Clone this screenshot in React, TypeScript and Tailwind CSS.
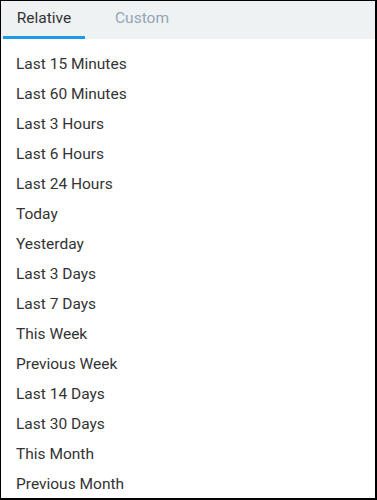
const ranges = [
  'Last 15 Minutes',
  'Last 60 Minutes',
  'Last 3 Hours',
  'Last 6 Hours',
  'Last 24 Hours',
  'Today',
  'Yesterday',
  'Last 3 Days',
  'Last 7 Days',
  'This Week',
  'Previous Week',
  'Last 14 Days',
  'Last 30 Days',
  'This Month',
  'Previous Month',
];

export default function App() {
  return (
    <div className="w-[377px] h-[500px] overflow-hidden border-t border-l border-r-2 border-b-2 border-black bg-white font-['Roboto',sans-serif]">
      <div className="flex h-[38px] bg-[#eef2f3] pl-[2px]">
        <button className="w-[82px] border-b-[3px] border-[#1e9be8] pt-[1px] text-[15.5px] text-[#333333]">
          Relative
        </button>
        <button className="w-[114px] border-b-[3px] border-transparent pt-[1px] text-[15.5px] text-[#93a5b7]">
          Custom
        </button>
      </div>
      <ul className="border-b border-[#cfdde3] pt-[11px]">
        {ranges.map((r) => (
          <li key={r} className="flex h-[30px] items-center px-[15px] text-[15.5px] text-[#333333]">
            {r}
          </li>
        ))}
      </ul>
    </div>
  );
}
